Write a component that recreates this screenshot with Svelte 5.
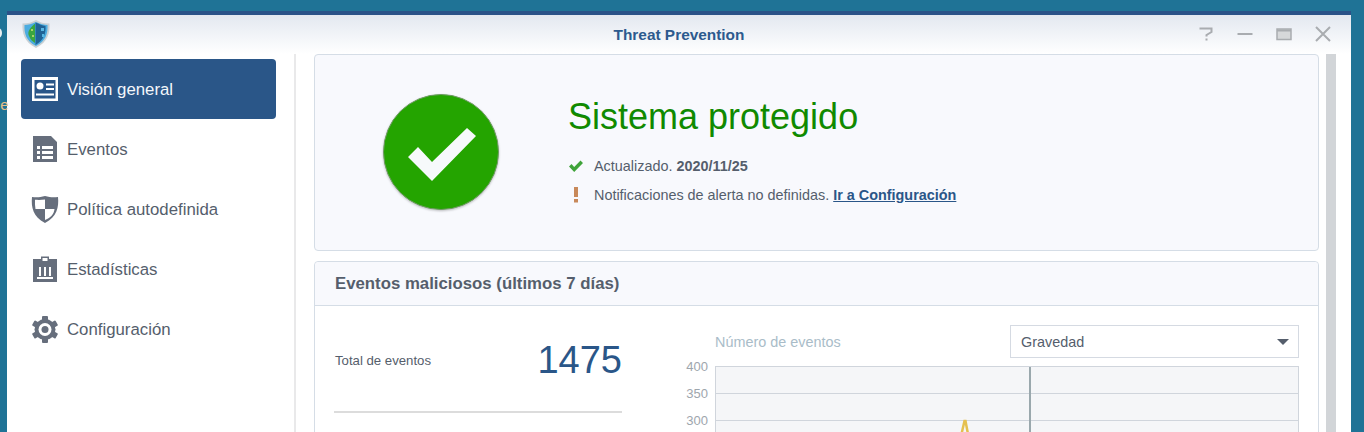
<script lang="ts">
	const navItems = [
		{ id: 'overview', label: 'Visión general', active: true },
		{ id: 'events', label: 'Eventos' },
		{ id: 'policy', label: 'Política autodefinida' },
		{ id: 'stats', label: 'Estadísticas' },
		{ id: 'settings', label: 'Configuración' }
	];

	const axisLabels = ['400', '350', '300'];
</script>

<div class="desktop">
	<span class="desk-dot"></span>
	<span class="desk-label">de</span>

	<div class="window">
		<header class="titlebar">
			<svg class="logo" viewBox="0 0 30 30" aria-hidden="true">
				<path d="M15 1 C19 3.500 23 4.500 28.500 4.500 C29 14 27 23 15 29 C3 23 1 14 1.500 4.500 C7 4.500 11 3.500 15 1 Z" fill="#c9d0d4" />
				<path d="M15 3 C19 5 23 6 26.500 6 C27 14 25 22 15 27 C5 22 3 14 3.500 6 C7 6 11 5 15 3 Z" fill="#4bace0" />
				<path d="M14.500 3.500 C18 5 21.500 6.500 24.500 7 C25 14 23 21 14.500 26 Z" fill="#1f6396" />
				<path d="M13.500 5 C9 9 6 13 8 17 C9 20 11 22 14 24 V5 Z" fill="#3aa53f" />
				<path d="M10 10 l2 0 l0 2 l-2 0 Z M11 16 l2 0 l0 2 l-2 0 Z" fill="#a6d468" />
				<path d="M20 9 l3 0 l0 3 l-3 0 Z M21 15 l2 0 l0 3 l-2 0 Z" fill="#58b8e4" />
			</svg>
			<h1>Threat Prevention</h1>
			<div class="controls">
				<svg viewBox="0 0 16 16" aria-hidden="true">
					<path d="M1.500 2.500 H13.500 V6 L8.500 9 V10.500 M8.500 12.500 V14.500" class="ctl" />
				</svg>
				<svg viewBox="0 0 16 16" aria-hidden="true"><path d="M0.500 8 H15.500" class="ctl" /></svg>
				<svg viewBox="0 0 16 16" aria-hidden="true">
					<path d="M1 3 H15 V13.500 H1 Z" class="ctl thin" />
					<path d="M1 4.500 H15" class="ctl" />
				</svg>
				<svg viewBox="0 0 16 16" aria-hidden="true"><path d="M1 1 L15 15 M15 1 L1 15" class="ctl" /></svg>
			</div>
		</header>

		<div class="body">
			<nav class="sidebar">
				{#each navItems as item}
					<div class="nav-item" class:active={item.active}>
						<svg class="nav-icon" viewBox="0 0 28 28" aria-hidden="true">
							{#if item.id === 'overview'}
								<path fill-rule="evenodd" d="M1 2 H27 V26 H1 Z M3.500 5 V23.500 H24.500 V5 Z" fill="#fff" />
								<circle cx="9" cy="11" r="3.500" fill="#fff" />
								<path d="M15 8.500 H23 V10.500 H15 Z M15 13 H23 V15 H15 Z M5 18.500 H23 V20.500 H5 Z" fill="#fff" />
							{:else if item.id === 'events'}
								<path fill-rule="evenodd" d="M2 1 H20 L26 7 V27 H2 Z M6 11 V14 H9 V11 Z M11 11 V14 H22 V11 Z M6 16 V19 H9 V16 Z M11 16 V19 H22 V16 Z M6 21 V24 H9 V21 Z M11 21 V24 H22 V21 Z" fill="#666e7c" />
							{:else if item.id === 'policy'}
								<path transform="translate(28 0) scale(-1 1)" fill-rule="evenodd" d="M14 1 C19 2.500 23 2.500 27 2 C28 12 26 22 14 28 C2 22 0 12 1 2 C5 2.500 9 2.500 14 1 Z M14 4.500 V14 H4.500 C5 19 8 22.500 14 25 V14 H23.500 C24 11 24.200 8 24 4.800 C20.500 5 17.500 5 14 4.500 Z" fill="#666e7c" />
							{:else if item.id === 'stats'}
								<path fill-rule="evenodd" d="M2 4 H10 V1.500 H18 V4 H26 V27 H2 Z M11.500 3 V6 H16.500 V3 Z M6 22 V24 H22 V22 Z M8 12 V21 H10 V12 Z M13 12 V21 H15 V12 Z M18 12 V21 H20 V12 Z" fill="#666e7c" />
							{:else}
								<circle cx="14" cy="14.500" r="10.500" fill="#666e7c" />
								<g fill="#666e7c">
									<rect x="11" y="1" width="6" height="27" rx="1" transform="rotate(0 14 14.500)" />
									<rect x="11" y="1" width="6" height="27" rx="1" transform="rotate(60 14 14.500)" />
									<rect x="11" y="1" width="6" height="27" rx="1" transform="rotate(120 14 14.500)" />
								</g>
								<circle cx="14" cy="14.500" r="6.500" fill="#fff" />
								<circle cx="14" cy="14.500" r="3.500" fill="#666e7c" />
							{/if}
						</svg>
						<span>{item.label}</span>
					</div>
				{/each}
			</nav>

			<main class="content">
				<div class="panels">
					<section class="panel status">
						<div class="badge">
							<svg viewBox="0 0 116 116" aria-hidden="true">
								<circle cx="58" cy="58" r="57.500" fill="#24a400" stroke="#6f9a63" stroke-width="1" />
								<path d="M25 63 L35 53 L49 68 L84 34 L93 42 L49 87 Z" fill="#f6f9fb" />
							</svg>
						</div>
						<div class="status-text">
							<h2>Sistema protegido</h2>
							<p class="line">
								<svg class="mark" viewBox="0 0 16 14" aria-hidden="true">
									<path d="M1 7.500 L3.500 5 L6.200 8 L12.500 1.500 L15 4 L6.200 13 Z" fill="#3fa33a" />
								</svg>
								<span>Actualizado. <b>2020/11/25</b></span>
							</p>
							<p class="line">
								<svg class="mark" viewBox="0 0 16 16" aria-hidden="true">
									<path d="M6 0 H10 V10 H6 Z M6 12 H10 V15.500 H6 Z" fill="#c8895a" />
								</svg>
								<span>Notificaciones de alerta no definidas. <a href="#settings">Ir a Configuración</a></span>
							</p>
						</div>
					</section>

					<section class="panel events">
						<h3>Eventos maliciosos (últimos 7 días)</h3>
						<div class="events-body">
							<div class="totals">
								<div class="total-row">
									<span class="total-label">Total de eventos</span>
									<span class="total-num">1475</span>
								</div>
							</div>
							<div class="chart-area">
								<div class="chart-head">
									<span class="chart-title">Número de eventos</span>
									<div class="select">
										<span>Gravedad</span>
										<i class="caret"></i>
									</div>
								</div>
								<div class="chart">
									<div class="axis">
										{#each axisLabels as label}
											<span>{label}</span>
										{/each}
									</div>
									<div class="plot">
										<div class="grid-row"></div>
										<div class="grid-row"></div>
										<div class="grid-row"></div>
										<div class="cursor"></div>
										<svg class="spike" viewBox="0 0 16 14" aria-hidden="true">
											<path d="M4.500 14 L7.500 1 H8.500 L11 14" fill="none" stroke="#e5c04f" stroke-width="2.500" />
										</svg>
									</div>
								</div>
							</div>
						</div>
					</section>
				</div>
				<div class="scrollbar"></div>
			</main>
		</div>
	</div>
</div>

<style>
	:global(body) {
		margin: 0;
		overflow: hidden;
	}

	.desktop {
		position: relative;
		box-sizing: border-box;
		height: 432px;
		overflow: hidden;
		padding: 11px 13px 0 7px;
		background: #1f7396;
		font-family: 'Liberation Sans', Arial, sans-serif;
		color: #555e6c;
	}

	.desk-dot {
		position: absolute;
		left: -5px;
		top: 28px;
		width: 7px;
		height: 10px;
		border-radius: 50%;
		background: #e8eef0;
	}

	.desk-label {
		position: absolute;
		left: -8px;
		top: 96px;
		font-size: 15px;
		color: #e8c088;
	}

	.window {
		height: 421px;
		overflow: hidden;
		border-top: 4px solid #2a5288;
		background: #fff;
	}

	.titlebar {
		position: relative;
		display: flex;
		align-items: center;
		justify-content: center;
		height: 39px;
		background: linear-gradient(#e3e8f0, #fff);
	}

	.logo {
		position: absolute;
		left: 14px;
		top: 4px;
		width: 30px;
		height: 30px;
	}

	h1 {
		margin: 0;
		font-size: 15.4px;
		font-weight: 700;
		color: #2d5a8e;
	}

	.controls {
		position: absolute;
		right: 20px;
		top: 11px;
		display: flex;
		gap: 23px;
	}

	.controls svg {
		display: block;
		width: 16px;
		height: 16px;
	}

	.ctl {
		fill: none;
		stroke: #a9acb0;
		stroke-width: 2;
	}

	.ctl.thin {
		fill: #d6d8da;
		stroke-width: 1.5;
	}

	.body {
		display: flex;
		height: 378px;
	}

	.sidebar {
		box-sizing: border-box;
		flex: none;
		width: 289px;
		padding: 5px 18px 0 14px;
		border-right: 2px solid #e9e9ea;
	}

	.nav-item {
		display: flex;
		align-items: center;
		gap: 8px;
		height: 60px;
		padding-left: 10px;
		border-radius: 4px;
		font-size: 16.8px;
		color: #555e6c;
	}

	.nav-item span {
		position: relative;
		top: 1px;
	}

	.nav-item.active {
		background: #2a5688;
		color: #f4f7fb;
	}

	.nav-icon {
		flex: none;
		width: 28px;
		height: 28px;
	}

	.content {
		flex: 1;
		display: flex;
		min-width: 0;
		padding-left: 18px;
	}

	.panels {
		flex: none;
		width: 1005px;
	}

	.panel {
		box-sizing: border-box;
		border: 1px solid #d5dde6;
		border-radius: 4px;
	}

	.status {
		display: flex;
		height: 197px;
		background: #f8f9fd;
	}

	.badge {
		flex: none;
		width: 253px;
		padding: 39px 0 0 68px;
		box-sizing: border-box;
	}

	.badge svg {
		display: block;
		width: 116px;
		height: 116px;
		filter: drop-shadow(0 1px 1px rgba(0, 0, 0, 0.25));
	}

	h2 {
		margin: 40px 0 12px;
		font-size: 36px;
		line-height: 44px;
		font-weight: 400;
		color: #108a00;
	}

	.line {
		display: flex;
		align-items: center;
		gap: 10px;
		height: 29px;
		margin: 0;
		font-size: 14.4px;
		color: #555e6c;
	}

	.mark {
		flex: none;
		width: 16px;
		height: 16px;
	}

	a {
		font-weight: 700;
		color: #2a5688;
	}

	.events {
		margin-top: 10px;
		height: 240px;
	}

	h3 {
		margin: 0;
		padding-left: 20px;
		height: 43px;
		line-height: 43px;
		font-size: 16.8px;
		font-weight: 700;
		background: #f8f9fd;
		border-bottom: 1px solid #d5dde6;
		border-radius: 4px 4px 0 0;
		color: #555e6c;
	}

	.events-body {
		display: flex;
	}

	.totals {
		flex: none;
		width: 288px;
		margin-left: 19px;
		padding-top: 26px;
	}

	.total-row {
		display: flex;
		align-items: center;
		justify-content: space-between;
		height: 52px;
		padding: 2px 0 25px 1px;
		border-bottom: 2px solid #dcdcdc;
	}

	.total-label {
		font-size: 13.2px;
	}

	.total-num {
		font-size: 38px;
		color: #2a5688;
	}

	.chart-area {
		flex: none;
		width: 629px;
		margin-left: 48px;
		padding-top: 19px;
		box-sizing: border-box;
	}

	.chart-head {
		display: flex;
		align-items: center;
		justify-content: space-between;
		height: 33px;
		margin-left: 45px;
	}

	.chart-title {
		font-size: 14.4px;
		color: #a9bcc8;
	}

	.select {
		box-sizing: border-box;
		display: flex;
		align-items: center;
		justify-content: space-between;
		width: 289px;
		height: 33px;
		padding: 0 9px 0 10px;
		border: 1px solid #d5dae2;
		font-size: 14.4px;
	}

	.caret {
		width: 0;
		height: 0;
		border-left: 6px solid transparent;
		border-right: 6px solid transparent;
		border-top: 6px solid #555e6c;
	}

	.chart {
		display: flex;
		margin-top: 8px;
	}

	.axis {
		flex: none;
		width: 45px;
		display: flex;
		flex-direction: column;
		box-sizing: border-box;
		padding-right: 7px;
		margin-top: -7px;
		font-size: 13px;
		color: #9ea6ad;
		text-align: right;
	}

	.axis span {
		height: 27px;
		line-height: 15px;
	}

	.plot {
		position: relative;
		box-sizing: border-box;
		width: 584px;
		height: 80px;
		border-left: 1px solid #d0d5dc;
		border-right: 1px solid #d0d5dc;
		border-top: 1px solid #d0d5dc;
		background: #f5f6f8;
	}

	.grid-row {
		box-sizing: border-box;
		height: 27px;
		border-bottom: 1px solid #d0d5dc;
	}

	.cursor {
		position: absolute;
		left: 313px;
		top: 0;
		bottom: 0;
		width: 2px;
		background: #9aa8ad;
	}

	.spike {
		position: absolute;
		left: 241px;
		top: 53px;
		width: 16px;
		height: 14px;
		overflow: visible;
	}

	.scrollbar {
		flex: none;
		width: 10px;
		margin-left: 7px;
		background: #d2d5d8;
	}
</style>
